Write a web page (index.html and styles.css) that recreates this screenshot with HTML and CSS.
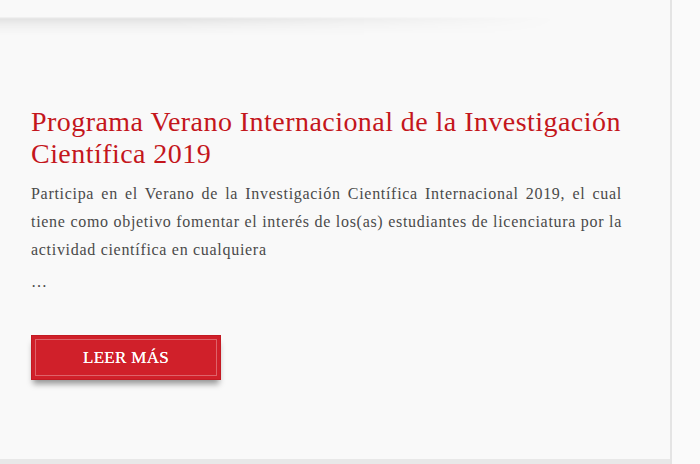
FILE: index.html
```html
<!DOCTYPE html>
<html lang="es">
<head>
<meta charset="utf-8">
<link rel="stylesheet" href="styles.css">
</head>
<body>
<div class="page">
  <main class="main">
    <div class="prev-card"></div>
    <article class="post">
      <h2 class="post-title">Programa Verano Internacional de la Investigación Científica 2019</h2>
      <p class="post-excerpt">Participa en el Verano de la Investigación Científica Internacional 2019, el cual tiene como objetivo fomentar el interés de los(as) estudiantes de licenciatura por la actividad científica en cualquiera</p>
      <p class="post-more">…</p>
      <a class="btn-read" href="#">LEER MÁS</a>
    </article>
    <div class="bottom-band"></div>
  </main>
  <aside class="side"></aside>
</div>
</body>
</html>
```
FILE: styles.css
```css
html, body {
  margin: 0;
  padding: 0;
  background: #f9f9f9;
  height: 464px;
  overflow: hidden;
}
.page {
  display: flex;
  height: 464px;
}
.main {
  width: 670px;
  display: flex;
  flex-direction: column;
  border-right: 2px solid #e4e4e4;
  background: #f9f9f9;
}
.side {
  flex: 1;
  background: #fafafa;
}
.prev-card {
  height: 18px;
  position: relative;
}
.prev-card::after {
  content: "";
  position: absolute;
  left: 0;
  top: 17px;
  width: 560px;
  height: 18px;
  background: linear-gradient(to bottom, rgba(0,0,0,0.02) 0, rgba(0,0,0,0.085) 2px, rgba(0,0,0,0.04) 8px, rgba(0,0,0,0) 18px);
  -webkit-mask-image: linear-gradient(to right, #000 30%, transparent 100%);
  mask-image: linear-gradient(to right, #000 30%, transparent 100%);
}
.post {
  flex: 1;
  padding: 88px 48px 0 31px;
  font-family: "Liberation Serif", "Times New Roman", serif;
}
.post-title {
  margin: 0;
  font-weight: normal;
  font-size: 28px;
  letter-spacing: 0.45px;
  line-height: 32px;
  color: #c4161c;
}
.post-excerpt {
  margin: 10px 0 0;
  font-size: 16px;
  letter-spacing: 0.7px;
  line-height: 28px;
  color: #4a4a4a;
  text-align: justify;
}
.post-more {
  margin: 8px 0 0;
  font-size: 16px;
  line-height: 20px;
  color: #4a4a4a;
}
.btn-read {
  display: flex;
  align-items: center;
  justify-content: center;
  margin-top: 43px;
  width: 190px;
  height: 45px;
  box-sizing: border-box;
  background: #d0202a;
  border: 1px solid #c31a23;
  outline: 1px solid rgba(255,255,255,0.3);
  outline-offset: -5px;
  color: #fff;
  font-size: 17px;
  letter-spacing: 0.3px;
  text-shadow: 0 0 0.4px #fff;
  text-decoration: none;
  box-shadow: 0 6px 6px -2px rgba(0,0,0,0.4);
}
.bottom-band {
  height: 5px;
  background: #e8e8e8;
}
```
